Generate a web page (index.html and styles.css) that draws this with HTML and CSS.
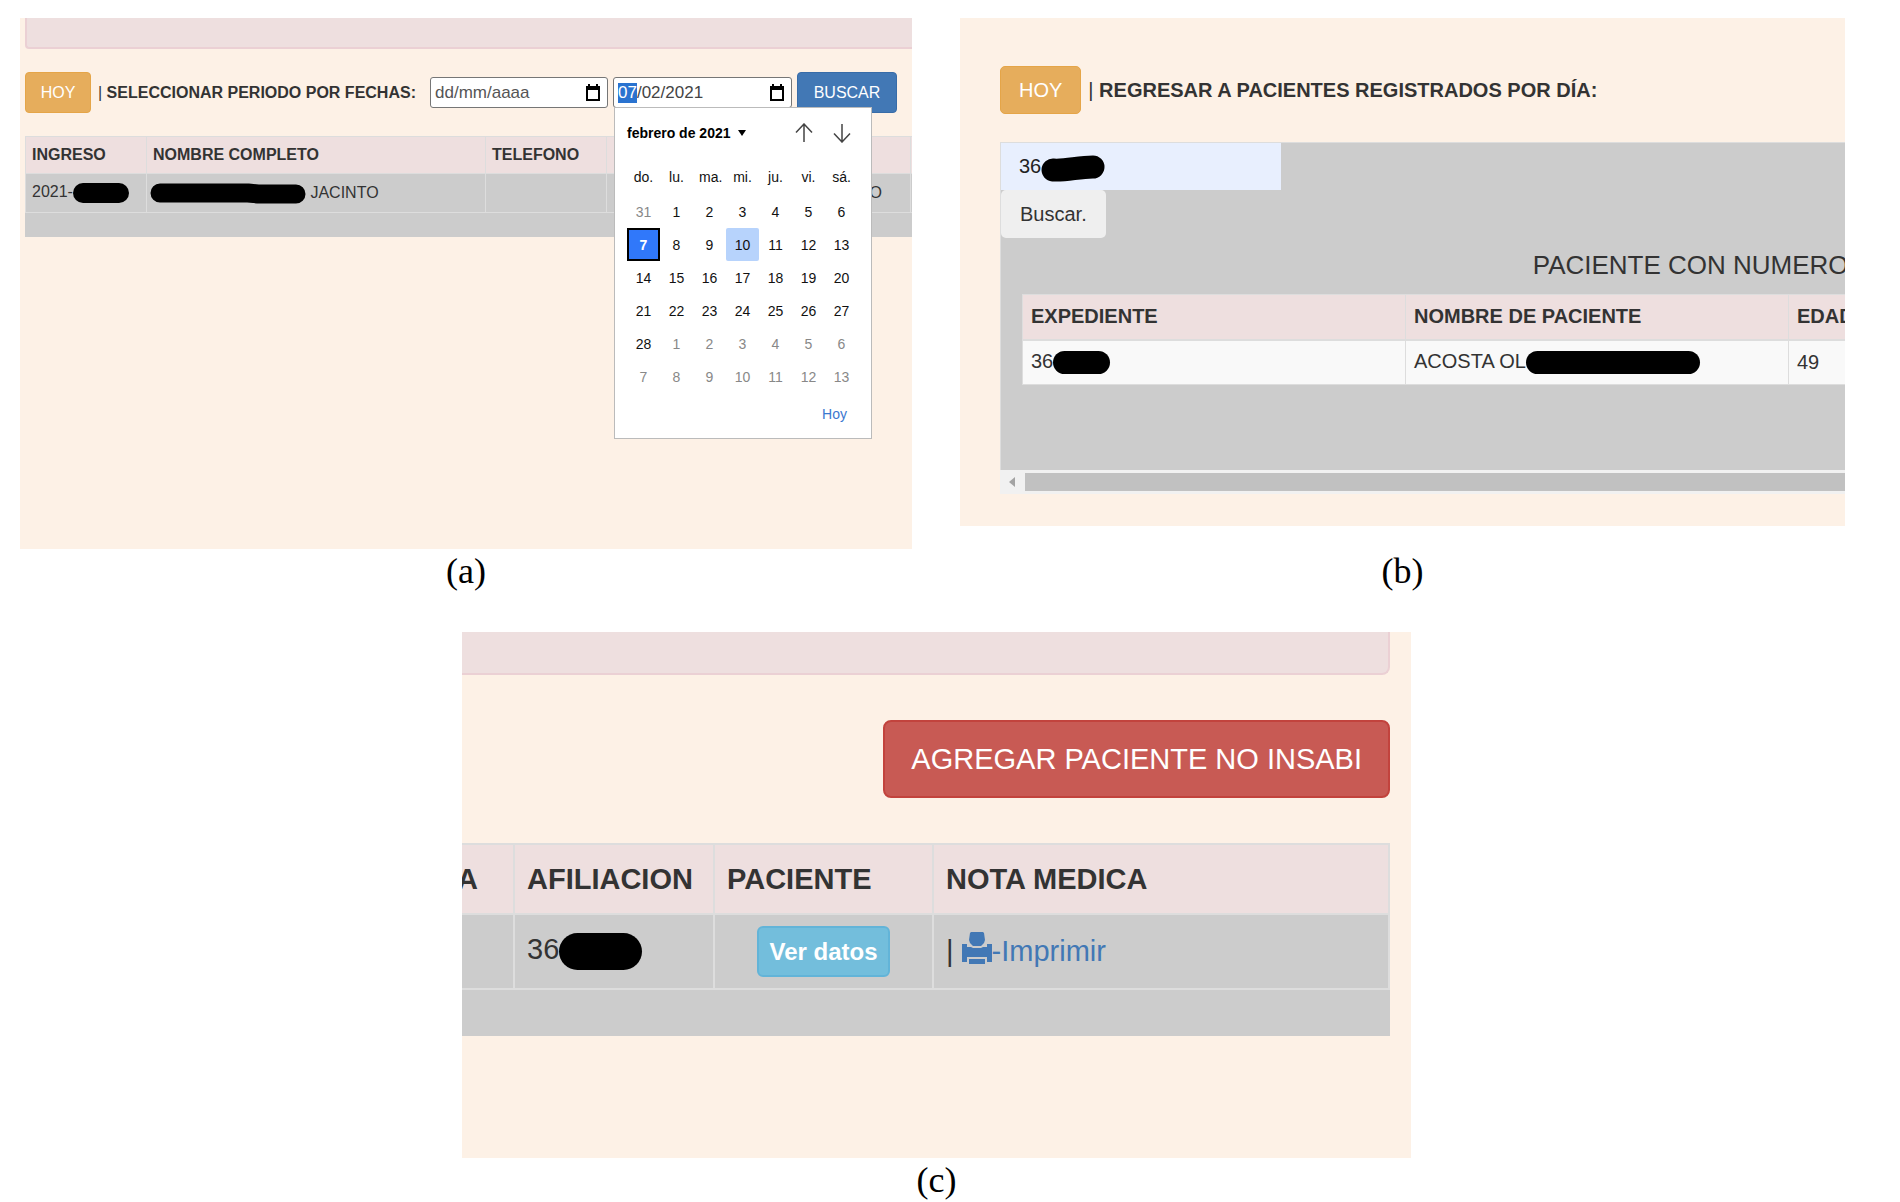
FILE: index.html
```
<!DOCTYPE html>
<html lang="es">
<head>
  <meta charset="UTF-8" />
  <meta name="viewport" content="width=device-width, initial-scale=1.0" />
  <title>Pacientes registrados</title>
  <link rel="stylesheet" href="styles.css">
</head>
<body>
  <main class="figures">
    <figure class="figure">
      <section class="panel panel-a">
        <div class="alert"></div>
        <form class="search-bar">
          <button type="button" class="btn btn-warning">HOY</button>
          <label for="desde"><span class="pipe">|</span> SELECCIONAR PERIODO POR FECHAS:</label>
          <div class="date-field">
            <input type="text" id="desde" placeholder="dd/mm/aaaa" />
            <button type="button" class="date-btn" aria-label="Abrir calendario">
              <svg width="16" height="17" viewBox="0 0 16 17"><path d="M3 0h2v2h6V0h2v2h2v15H1V2h2z M3 6v9h10V6z" fill="#000" fill-rule="evenodd" /></svg>
            </button>
          </div>
          <div class="date-field">
            <input type="text" id="hasta" value="07/02/2021" aria-label="Fecha final" />
            <button type="button" class="date-btn" aria-label="Abrir calendario">
              <svg width="16" height="17" viewBox="0 0 16 17"><path d="M3 0h2v2h6V0h2v2h2v15H1V2h2z M3 6v9h10V6z" fill="#000" fill-rule="evenodd" /></svg>
            </button>
            <div class="calendar">
              <div class="calendar-head">
                <button type="button" class="month">febrero de 2021
                  <svg width="8" height="6" viewBox="0 0 8 6"><path d="M0 0h8L4 6z" fill="#000" /></svg>
                </button>
                <button type="button" class="arrow" aria-label="Mes anterior">
                  <svg width="18" height="20" viewBox="0 0 18 20"><path d="M9 19V1M1 9.500L9 1l8 8.500" fill="none" stroke="#444" stroke-width="1.500" /></svg>
                </button>
                <button type="button" class="arrow" aria-label="Mes siguiente">
                  <svg width="18" height="20" viewBox="0 0 18 20"><path d="M9 1v18M1 10.500L9 19l8-8.500" fill="none" stroke="#444" stroke-width="1.500" /></svg>
                </button>
              </div>
              <table class="days">
                <thead>
                  <tr><th>do.</th><th>lu.</th><th>ma.</th><th>mi.</th><th>ju.</th><th>vi.</th><th>sá.</th></tr>
                </thead>
                <tbody>
                  <tr><td class="other">31</td><td>1</td><td>2</td><td>3</td><td>4</td><td>5</td><td>6</td></tr>
                  <tr><td class="selected">7</td><td>8</td><td>9</td><td class="today">10</td><td>11</td><td>12</td><td>13</td></tr>
                  <tr><td>14</td><td>15</td><td>16</td><td>17</td><td>18</td><td>19</td><td>20</td></tr>
                  <tr><td>21</td><td>22</td><td>23</td><td>24</td><td>25</td><td>26</td><td>27</td></tr>
                  <tr><td>28</td><td class="other">1</td><td class="other">2</td><td class="other">3</td><td class="other">4</td><td class="other">5</td><td class="other">6</td></tr>
                  <tr><td class="other">7</td><td class="other">8</td><td class="other">9</td><td class="other">10</td><td class="other">11</td><td class="other">12</td><td class="other">13</td></tr>
                </tbody>
              </table>
              <div class="calendar-foot">
                <button type="button" class="today-btn">Hoy</button>
              </div>
            </div>
          </div>
          <button type="button" class="btn btn-primary">BUSCAR</button>
        </form>
        <table class="grid-table">
          <colgroup>
            <col class="col-ingreso"><col class="col-nombre"><col class="col-telefono"><col class="col-servicio"><col>
          </colgroup>
          <thead>
            <tr><th>INGRESO</th><th>NOMBRE COMPLETO</th><th>TELEFONO</th><th></th><th></th></tr>
          </thead>
          <tbody>
            <tr>
              <td>2021-<span class="redacted"></span></td>
              <td class="name-cell"><svg class="scribble" width="156" height="21" viewBox="0 0 156 21"><path d="M10 10H98M98 10L108 11H146" fill="none" stroke="#000" stroke-width="19" stroke-linecap="round" stroke-linejoin="round" /></svg> JACINTO</td>
              <td></td>
              <td class="service-cell">O</td>
              <td></td>
            </tr>
            <tr class="foot-row"><td colspan="5"></td></tr>
          </tbody>
        </table>
      </section>
      <figcaption>(a)</figcaption>
    </figure>

    <figure class="figure">
      <section class="panel panel-b">
        <div class="back-bar">
          <button type="button" class="btn btn-warning">HOY</button>
          <strong><span class="pipe">|</span> REGRESAR A PACIENTES REGISTRADOS POR DÍA:</strong>
        </div>
        <div class="results">
          <form class="file-search">
            <div class="file-field">
              <input type="text" value="36" aria-label="Expediente" />
              <svg class="file-scribble" width="66" height="28" viewBox="0 0 66 28"><path d="M13 15C26 16 38 12 53 12" fill="none" stroke="#000" stroke-width="23" stroke-linecap="round" /></svg>
            </div>
            <button type="button" class="btn btn-light">Buscar.</button>
          </form>
          <h2>PACIENTE CON NUMERO</h2>
          <table class="grid-table">
            <thead>
              <tr><th>EXPEDIENTE</th><th>NOMBRE DE PACIENTE</th><th>EDAD</th></tr>
            </thead>
            <tbody>
              <tr>
                <td>36<span class="redacted"></span></td>
                <td>ACOSTA OL<span class="redacted redacted-long"></span></td>
                <td>49</td>
              </tr>
            </tbody>
          </table>
        </div>
        <div class="scrollbar">
          <svg width="25" height="24" viewBox="0 0 25 24"><path d="M15 7v10L9 12z" fill="#a3a3a3" /></svg>
          <div class="thumb"></div>
        </div>
      </section>
      <figcaption>(b)</figcaption>
    </figure>

    <figure class="figure figure-wide">
      <section class="panel panel-c">
        <div class="alert"></div>
        <div class="actions">
          <button type="button" class="btn btn-danger">AGREGAR PACIENTE NO INSABI</button>
        </div>
        <table class="grid-table">
          <colgroup>
            <col class="col-cut"><col class="col-afiliacion"><col class="col-paciente"><col>
          </colgroup>
          <thead>
            <tr><th class="cut-cell">A</th><th>AFILIACION</th><th>PACIENTE</th><th>NOTA MEDICA</th></tr>
          </thead>
          <tbody>
            <tr>
              <td></td>
              <td>36<span class="redacted"></span></td>
              <td class="button-cell"><button type="button" class="btn btn-info">Ver datos</button></td>
              <td>
                <span class="print"><span class="pipe">|</span>
                <a href="#"><svg width="30" height="33" viewBox="0 0 30 33"><path d="M9 0h12l1 1 1 7-1 3-3 3h-8l-3-3-1-3 1-7z M0 12h5v3h4l2 1h8l2-1h4v-3h5v18h-5v-5H5v5H0z M7 27h16v5H7z" fill="#4278b5" /></svg>-Imprimir</a></span>
              </td>
            </tr>
            <tr class="foot-row"><td colspan="4"></td></tr>
          </tbody>
        </table>
      </section>
      <figcaption>(c)</figcaption>
    </figure>
  </main>
  <script>
    // the day part of the date is selected when the calendar is open
    const hasta = document.getElementById('hasta');
    hasta.focus();
    hasta.setSelectionRange(0, 2);
  </script>
</body>
</html>
```

FILE: styles.css
```
* {
  box-sizing: border-box;
  margin: 0;
  padding: 0;
}
body {
  background-color: #fff;
  color: #333;
  font-family: "Liberation Sans", Arial, sans-serif;
  font-size: 16px;
}
button, input {
  font-family: inherit;
  font-size: inherit;
}
button {
  cursor: pointer;
}
svg {
  display: block;
}
.figures {
  display: grid;
  grid-template-columns: 892fr 885fr;
  column-gap: 48px;
  row-gap: 39px;
  padding: 18px 55px 0 20px;
}
.figure {
  display: flex;
  flex-direction: column;
  min-width: 0;
}
.figure-wide {
  grid-column: 1 / 3;
  width: 52%;
  justify-self: center;
  margin-left: 8px;
}
figcaption {
  margin-top: auto;
  color: #000;
  font-family: "Liberation Serif", "Times New Roman", serif;
  font-size: 36px;
  line-height: 44px;
  text-align: center;
}
.panel {
  background-color: #fdf1e6;
  overflow: hidden;
}
.alert {
  background-color: #eedfdf;
  border: 2px solid #ebd0d4;
  border-top: none;
}
.btn {
  border: 1px solid transparent;
  border-radius: 4px;
  white-space: nowrap;
}
.btn-warning {
  background-color: #e6ad5c;
  border-color: #e5a548;
  color: #fff;
}
.btn-primary {
  background-color: #4278b5;
  border-color: #386ca8;
  color: #fff;
}
.btn-light {
  background-color: #efefef;
  color: #333;
}
.btn-danger {
  background-color: #c85a54;
  border: 2px solid #c2433d;
  color: #fff;
}
.btn-info {
  background-color: #73bedc;
  border: 2px solid #62b4d8;
  color: #fff;
  font-weight: bold;
}
.pipe {
  font-weight: normal;
}
.grid-table {
  border-collapse: collapse;
  table-layout: fixed;
  background-color: #ccc;
}
.grid-table th,
.grid-table td {
  border: 1px solid #ddd;
  text-align: left;
  vertical-align: middle;
  white-space: nowrap;
}
.grid-table th {
  background-color: #eedfdf;
}
.grid-table .foot-row td {
  border-color: #ccc;
  border-top-color: #ddd;
}
.redacted {
  display: inline-block;
  background-color: #000;
  border-radius: 20px;
  vertical-align: middle;
}

/* panel a */
.panel-a {
  min-height: 531px;
  padding-left: 5px;
}
.panel-a .alert {
  height: 31px;
  border-right: none;
  border-bottom-left-radius: 4px;
}
.search-bar {
  display: grid;
  grid-template-columns: 66px 1fr 178px 179px 100px;
  align-items: center;
  gap: 5px;
  padding: 23px 15px 23px 0;
}
.search-bar .btn {
  height: 41px;
}
.search-bar label {
  padding-left: 2px;
  font-weight: bold;
  white-space: nowrap;
}
.date-field {
  position: relative;
  display: flex;
  align-items: center;
  height: 31px;
  padding: 0 6px 0 4px;
  background-color: #fff;
  border: 1px solid #767676;
  border-radius: 3px;
}
.date-field input {
  flex: 1;
  min-width: 0;
  border: none;
  outline: none;
  background: none;
  color: #444;
  font-size: 17px;
}
.date-field input::placeholder {
  color: #555;
}
.date-field input::selection {
  background-color: #2a73d0;
  color: #fff;
}
.date-btn,
.arrow,
.month,
.today-btn {
  border: none;
  background: none;
}
.calendar {
  position: absolute;
  top: 29px;
  left: 0;
  z-index: 2;
  width: 258px;
  padding: 0 12px;
  background-color: #fff;
  border: 1px solid #bbb;
  color: #111;
  font-size: 14px;
}
.calendar-head {
  display: flex;
  align-items: center;
  gap: 20px;
  height: 50px;
}
.month {
  display: flex;
  align-items: center;
  gap: 7px;
  margin-right: auto;
  color: #000;
  font-weight: bold;
  white-space: nowrap;
}
.calendar-head .arrow:last-child {
  margin-right: 8px;
}
.days {
  width: 231px;
  border-collapse: collapse;
  table-layout: fixed;
}
.days th,
.days td {
  height: 33px;
  font-weight: normal;
  text-align: center;
}
.days .other {
  color: #888;
}
.days .selected {
  background-color: #3078fa;
  box-shadow: inset 0 0 0 2px #000;
  color: #fff;
  font-weight: bold;
}
.days .today {
  background-color: #b7d3fc;
  border-radius: 2px;
}
.calendar-foot {
  display: flex;
  justify-content: flex-end;
  height: 45px;
  padding: 0 12px 4px 0;
}
.today-btn {
  color: #3b78d0;
}
.panel-a .grid-table {
  width: 112%;
}
.panel-a .col-ingreso {
  width: 121px;
}
.panel-a .col-nombre {
  width: 339px;
}
.panel-a .col-telefono {
  width: 121px;
}
.panel-a .col-servicio {
  width: 304px;
}
.panel-a th {
  height: 37px;
  padding: 0 6px;
}
.panel-a .grid-table td {
  height: 39px;
  padding: 0 6px;
}
.panel-a .grid-table .name-cell {
  padding-left: 3px;
}
.panel-a .grid-table .service-cell {
  padding-right: 28px;
  text-align: right;
}
.panel-a .grid-table .foot-row td {
  height: 24px;
}
.panel-a .redacted {
  width: 56px;
  height: 20px;
}
.scribble {
  display: inline-block;
  vertical-align: middle;
}

/* panel b */
.panel-b {
  padding: 48px 0 32px 40px;
  font-size: 20px;
}
.back-bar {
  display: flex;
  align-items: center;
  gap: 7px;
  margin-bottom: 28px;
  white-space: nowrap;
}
.panel-b .btn {
  height: 48px;
  padding: 0 18px;
  border-radius: 5px;
}
.results {
  background-color: #ccc;
  border-top: 1px solid #ddd;
  border-left: 1px solid #ddd;
  padding-bottom: 85px;
  overflow: hidden;
}
.file-field {
  position: relative;
  width: 280px;
}
.file-field input {
  display: block;
  width: 100%;
  height: 47px;
  padding: 0 18px;
  background-color: #e8effe;
  border: none;
  color: #222;
}
.file-scribble {
  position: absolute;
  top: 12px;
  left: 39px;
}
.results h2 {
  padding: 11px 0 13px 63%;
  font-size: 26px;
  font-weight: normal;
  line-height: 32px;
  white-space: nowrap;
}
.results .grid-table {
  width: 1150px;
  margin-left: 21px;
  background-color: #f9f9f9;
}
.results th,
.results td {
  height: 45px;
  padding: 0 8px;
}
.results th {
  border-bottom-width: 2px;
}
.results .redacted {
  width: 57px;
  height: 23px;
}
.results .redacted-long {
  width: 174px;
}
.scrollbar {
  display: flex;
  align-items: center;
  height: 24px;
  background-color: #f1f1f1;
}
.thumb {
  flex: 1;
  height: 18px;
  background-color: #c1c1c1;
}

/* panel c */
.panel-c {
  min-height: 526px;
  padding-right: 21px;
  font-size: 29px;
}
.panel-c .alert {
  height: 43px;
  border-left: none;
  border-bottom-right-radius: 8px;
}
.actions {
  display: flex;
  justify-content: flex-end;
  padding: 45px 0;
}
.btn-danger {
  height: 78px;
  padding: 0 26px;
  border-radius: 8px;
}
.panel-c .grid-table {
  width: calc(100% + 40px);
  margin-left: -40px;
}
.panel-c .col-cut {
  width: 91px;
}
.panel-c .col-afiliacion {
  width: 200px;
}
.panel-c .col-paciente {
  width: 219px;
}
.panel-c th,
.panel-c td {
  height: 70px;
  padding: 0 12px;
  border-width: 2px;
}
.panel-c td {
  height: 75px;
}
.panel-c .cut-cell {
  padding-right: 35px;
  text-align: right;
}
.panel-c .button-cell {
  text-align: center;
}
.panel-c .foot-row td {
  height: 46px;
}
.panel-c .redacted {
  width: 83px;
  height: 37px;
}
.btn-info {
  height: 51px;
  padding: 0 10px;
  border-radius: 6px;
  font-size: 24px;
  vertical-align: middle;
}
.print,
.print a {
  display: flex;
  align-items: center;
}
.print {
  gap: 8px;
}
.print a {
  color: #4278b5;
  text-decoration: none;
}
.print svg {
  margin-bottom: 6px;
}
```
